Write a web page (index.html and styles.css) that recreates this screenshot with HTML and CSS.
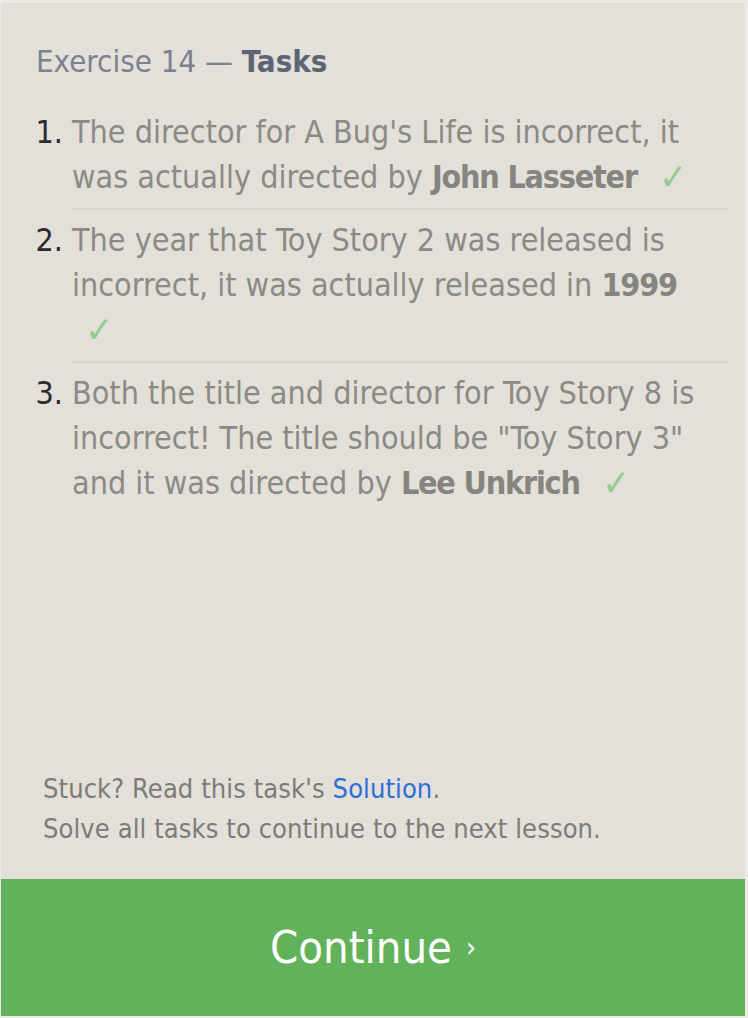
FILE: index.html
```html
<!DOCTYPE html>
<html>
<head>
<meta charset="utf-8">
<link rel="stylesheet" href="styles.css">
</head>
<body>
<div class="panel">
  <div class="content">
    <h1 class="title">Exercise 14 — <span class="title-strong">Tasks</span></h1>
    <ol class="tasks">
      <li class="task">The director for A Bug's Life is incorrect, it was actually directed by <b class="em">John Lasseter</b> <span class="check">✓</span></li>
      <li class="task">The year that Toy Story 2 was released is incorrect, it was actually released in <b class="em">1999</b> <span class="check">✓</span></li>
      <li class="task task-last">Both the title and director for Toy Story 8 is incorrect! The title should be "Toy Story 3" and it was directed by <b class="em">Lee Unkrich</b> <span class="check">✓</span></li>
    </ol>
  </div>
  <div class="footer">
    <p class="note">Stuck? Read this task's <a class="link" href="#">Solution</a>.</p>
    <p class="note">Solve all tasks to continue to the next lesson.</p>
  </div>
  <div class="continue">Continue <span class="chev">›</span></div>
</div>
</body>
</html>
```
FILE: styles.css
```css
html, body {
  margin: 0;
  padding: 0;
  background: #ebeae4;
  height: 100%;
}
body {
  font-family: "DejaVu Sans Condensed", "DejaVu Sans", sans-serif;
  padding: 3px 3px 2px 1px;
  box-sizing: border-box;
}
.panel {
  background: #e2e0d8;
  height: 100%;
  display: flex;
  flex-direction: column;
}
.content {
  flex: 1;
  padding: 0 17px 0 35px;
}
.title {
  margin: 0;
  padding-top: 38px;
  font-size: 31px;
  line-height: 40px;
  font-weight: normal;
  color: #7b8190;
}
.title-strong {
  color: #5d6474;
  font-weight: bold;
}
.tasks {
  margin: 29px 0 0 0;
  padding: 0 0 0 36px;
  font-size: 32px;
  line-height: 45px;
  color: #8b8a85;
}
.task {
  padding: 0 10px 8px 0;
  border-bottom: 2px solid #d8d6cb;
  margin-bottom: 8px;
}
.task::marker {
  color: #2b2b2b;
}
.task-last {
  border-bottom: none;
}
.em {
  color: #85847f;
  letter-spacing: -1.2px;
}
.check {
  display: inline-block;
  margin-left: 15px;
  transform: scale(1.15);
  color: #93cc8f;
}
.footer {
  padding: 0 0 30px 42px;
}
.note {
  margin: 0;
  font-size: 27px;
  line-height: 40px;
  color: #7c7b77;
  letter-spacing: 0.1px;
}
.link {
  color: #2e6ed9;
  text-decoration: none;
}
.continue {
  height: 137px;
  background: #61b25a;
  color: #ffffff;
  font-size: 45px;
  display: flex;
  align-items: center;
  justify-content: center;
  gap: 14px;
}
.chev {
  font-size: 28px;
}
```
